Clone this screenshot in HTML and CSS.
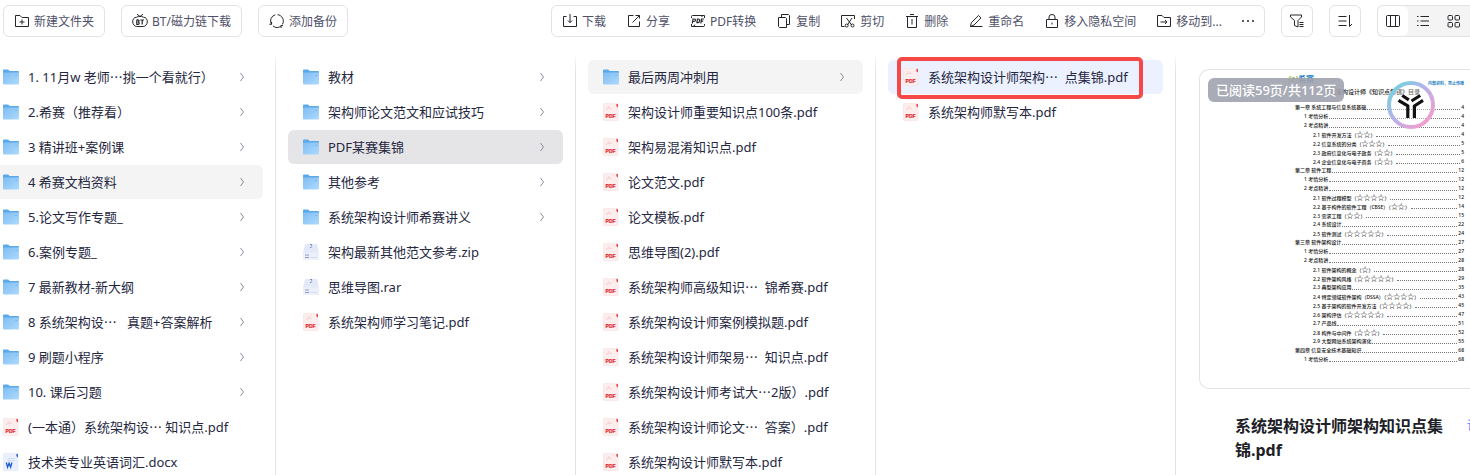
FILE: index.html
```
<!DOCTYPE html>
<html lang="zh-CN">
<head>
    <meta charset="UTF-8">
    <meta name="viewport" content="width=device-width, initial-scale=1.0">
    <title>我的文件</title>
    <link rel="stylesheet" href="styles.css">
</head>
<body>
    <svg class="sprite" aria-hidden="true">
        <defs>
            <linearGradient id="folder-fill" x1="0" y1="0" x2="1" y2="1">
                <stop offset="0" stop-color="#7fbdf3"/>
                <stop offset="1" stop-color="#addafd"/>
            </linearGradient>
            <linearGradient id="ring-fill" x1="0" y1="0" x2="1" y2="1">
                <stop offset="0.15" stop-color="#7fcbe2"/>
                <stop offset="0.5" stop-color="#bcb0ea"/>
                <stop offset="0.85" stop-color="#ee9fd0"/>
            </linearGradient>
        </defs>
        <symbol id="folder" viewBox="0 0 16 16">
            <path d="M0 1.5Q0 .5 1 .5H5.2L6.6 2H15Q16 2 16 3V8H0Z" fill="#5ba9e8"/>
            <path d="M0 4.6Q0 3.6 1 3.6H16V14.5Q16 15.5 15 15.5H1Q0 15.5 0 14.5Z" fill="url(#folder-fill)"/>
            <path d="M12.5 6.5H14" stroke="#6bb1ec"/>
        </symbol>
        <symbol id="pdf" viewBox="0 0 16 18">
            <path d="M.5 1.5Q.5 .5 1.5 .5H12L15 3.5V16.5Q15 17.5 14 17.5H1.5Q.5 17.5 .5 16.5Z" fill="#fdeeee" stroke="#f9dfdf" stroke-width=".6"/>
            <path d="M13.4 .8H14.2Q15 .8 15 1.8V4.4L13.4 3.2Z" fill="#e0454b"/>
            <path d="M3 6.5C4.5 6 5.8 4.2 5.5 3.2C5.1 2.5 5 4.6 8.5 5.4C6.5 5.2 4.5 5.8 3 6.5" fill="none" stroke="#f6c6c7" stroke-width=".6"/>
            <text x="2.6" y="15" font-size="5" font-weight="700" fill="#e5252c" stroke="#e5252c" stroke-width=".2">PDF</text>
        </symbol>
        <symbol id="doc" viewBox="0 0 16 18">
            <path d="M.5 1.5Q.5 .5 1.5 .5H12L15 3.5V16.5Q15 17.5 14 17.5H1.5Q.5 17.5 .5 16.5Z" fill="#eaf1fd" stroke="#dce7fa" stroke-width=".6"/>
            <path d="M13.4 .8H14.2Q15 .8 15 1.8V4.4L13.4 3.2Z" fill="#2c62cc"/>
            <path d="M4.5 5.5H12M4.5 7.5H12" stroke="#ccdcf7"/>
            <path d="M3.3 9.5L4.6 14.2L6.1 10.2L7.6 14.2L8.9 9.5" fill="none" stroke="#1d5bd0" stroke-width="1.3"/>
        </symbol>
        <symbol id="zip" viewBox="0 0 16 18">
            <path d="M2 1H14L16 10V16Q16 17 15 17H1Q0 17 0 16V10Z" fill="#e3e9f8"/>
            <path d="M0 9.5H16V16Q16 17 15 17H1Q0 17 0 16Z" fill="#edf0fb"/>
            <path d="M7 1.5H9M8 3H9.2M7 4.5H8.4" stroke="#7d8bb5"/>
            <path d="M2 12H6M2 14.5H6" stroke="#8b9cc8" stroke-width="1.2"/>
            <path d="M7.5 14.5H14" stroke="#d2dbf1"/>
        </symbol>
        <symbol id="chevron" viewBox="0 0 6 10">
            <path d="M1.5 1L4.5 5L1.5 9" fill="none" stroke="#8b8d9b"/>
        </symbol>
    </svg>

    <header class="toolbar">
        <button class="tool boxed">
            <svg class="icon" viewBox="0 0 16 16"><path d="M1.5 2.5H6L8 4.5H14.5V13.5H1.5ZM8 6.5V11.5M5.5 9H10.5"/></svg>新建文件夹
        </button>
        <button class="tool boxed">
            <svg class="icon" viewBox="0 0 16 16"><path d="M4.6 4.2C6.5 3.2 9.5 3.2 11.4 4.2C14 4.2 15.5 6.5 15.3 9C15 11.5 13.5 13.5 11.2 13.5H4.8C2.5 13.5 1 11.5.7 9C.5 6.5 2 4.2 4.6 4.2M5 1.2L8 3.5L11 1.2"/><path class="bold" d="M4.8 6.7V11.3H6.2Q7.4 11.2 7.2 10Q7.1 9 5.8 9Q7 8.9 7 7.9Q7 6.8 6 6.8H4.8M8.3 7H12M10.2 7V11.6"/></svg>BT/磁力链下载
        </button>
        <button class="tool boxed">
            <svg class="icon" viewBox="0 0 16 16"><path d="M6.3 1.8A6.4 6.4 0 0 0 2.4 11.2M4 13A6.4 6.4 0 0 0 12.2 12.8M13.4 11.4A6.4 6.4 0 0 0 8.6 1.7M2.6 8.7V11.3H.4M12 15V12.6H14"/></svg>添加备份
        </button>

        <div class="actions">
            <button class="tool"><svg class="icon" viewBox="0 0 16 16"><path d="M4.5 3.5H1.5V13.5H14.5V3.5H11.5M8 1V9.5M6 7.5L8 9.7L10 7.5"/></svg>下载</button>
            <button class="tool"><svg class="icon" viewBox="0 0 16 16"><path d="M7.5 2.5H2.5V13.5H13.5V8.5M6.5 9.5L13.5 2.5M9.5 2.5H13.5V5.5"/></svg>分享</button>
            <button class="tool"><svg class="icon" viewBox="0 0 16 16"><path d="M1.5 5V3.5Q1.5 2.5 2.5 2.5H14.5V5M14.5 11V12.5Q14.5 13.5 13.5 13.5H1.5V11M3 13.5L5.2 11.8M13 2.5L11.5 4"/><path class="bold" d="M2.3 10.5L3 6H4.5Q5.8 6.2 5.4 7.5Q5 8.6 2.8 8.5M6.8 10L7.5 6H8.5Q10 6.5 9.6 8.2Q9.2 10 6.8 10M10.8 10.5L11.5 6H14M11.2 8.2H13.2"/></svg>PDF转换</button>
            <button class="tool"><svg class="icon" viewBox="0 0 16 16"><path d="M2.5 4.5H9.5L10.5 5.5V14.5H3.5L2.5 13.5ZM5.5 4.5V1.5H12.5L13.5 2.5V11.5H10.5"/></svg>复制</button>
            <button class="tool"><svg class="icon" viewBox="0 0 16 16"><path d="M4.5 13.5H1.5V2.5H14.5V6M6.5 5L11.6 12M12 5L7.4 12"/><circle cx="6.7" cy="12.5" r="1.5"/><circle cx="12.5" cy="12.5" r="1.5"/></svg>剪切</button>
            <button class="tool"><svg class="icon" viewBox="0 0 16 16"><path d="M2 3.5H14M6 1.5H10M3.5 3.5V14.5H12.5V3.5M8 6V11.5"/></svg>删除</button>
            <button class="tool"><svg class="icon" viewBox="0 0 16 16"><path d="M2.5 13.5L3.3 9.7L10.6 2.5L13 4.9L6 12ZM2 13.5H14.5"/></svg>重命名</button>
            <button class="tool"><svg class="icon" viewBox="0 0 16 16"><path d="M2.5 6.5H13.5V14.5H2.5ZM5 6.5V4Q5 1.5 8 1.5Q11 1.5 11 4V6.5M8 9.5V11.5"/></svg>移入隐私空间</button>
            <button class="tool"><svg class="icon" viewBox="0 0 16 16"><path d="M1.5 2.5H6L8 4.5H14.5V13.5H1.5ZM4.5 9H11M9 7L11 9L9 11"/></svg>移动到...</button>
            <button class="tool" aria-label="更多"><svg class="more" viewBox="0 0 12 16"><circle cx="1" cy="8" r="1"/><circle cx="6" cy="8" r="1"/><circle cx="11" cy="8" r="1"/></svg></button>
        </div>

        <button class="tool square" aria-label="筛选">
            <svg class="icon" viewBox="0 0 16 16"><path d="M1.5 2H12.5V4L9 7.5V14L5.5 12.5V7.5L1.5 4ZM10.5 9.5H14.5M10.5 11.5H14.5M10.5 13.5H14.5"/></svg>
        </button>
        <button class="tool square" aria-label="排序">
            <svg class="icon" viewBox="0 0 16 16"><path d="M1.5 3.5H9.5M1.5 8H9.5M1.5 12.5H9.5M12.5 2V13.5L15 11"/></svg>
        </button>
        <div class="views">
            <button class="view active" aria-label="分栏视图"><svg class="icon" viewBox="0 0 16 16"><rect x="1.5" y="2.5" width="13" height="11" rx="1"/><path d="M5.5 2.5V13.5M10.5 2.5V13.5"/></svg></button>
            <button class="view" aria-label="列表视图"><svg class="icon" viewBox="0 0 16 16"><path d="M2 3.5H3.5M5.5 3.5H14M2 8H3.5M5.5 8H14M2 12.5H3.5M5.5 12.5H14"/></svg></button>
            <button class="view" aria-label="网格视图"><svg class="icon" viewBox="0 0 16 16"><rect x="2" y="2.5" width="4.5" height="4.5" rx="1"/><rect x="9" y="2.5" width="4.5" height="4.5" rx="1"/><rect x="2" y="9.5" width="4.5" height="4.5" rx="1"/><rect x="9" y="9.5" width="4.5" height="4.5" rx="1"/></svg></button>
        </div>
    </header>

    <main class="browser">
        <nav class="column first" id="col1"></nav>
        <nav class="column" id="col2"></nav>
        <nav class="column" id="col3"></nav>
        <nav class="column" id="col4"></nav>

        <section class="preview">
            <div class="page">
                <div class="page-head">
                    <span class="brand"><i>(e)</i>希赛</span>
                    <span class="notice">内部资料，禁止传播</span>
                </div>
                <p class="page-title">系统架构设计师《知识点集锦》目录</p>
                <div id="toc"></div>
                <span class="progress">已阅读59页/共112页</span>
                <svg class="watermark" viewBox="0 0 48 48">
                    <circle cx="24" cy="24" r="22" fill="#ffffff" fill-opacity=".35" stroke="url(#ring-fill)" stroke-width="4"/>
                    <path d="M11.5 19.3L20.8 25V37M36 19.3L27.4 25V37M15.2 14.5L21.8 18.8M33.2 14.5L24.5 20" fill="none" stroke="#111" stroke-width="3.2"/>
                </svg>
            </div>
            <div class="info">
                <h2>系统架构设计师架构知识点集锦.pdf</h2>
                <a href="#">详情</a>
            </div>
        </section>
    </main>

    <script>
        // [icon, name, row state]
        const columns = {
            col1: [
                ['folder', '1. 11月w 老师…挑一个看就行）'],
                ['folder', '2.希赛（推荐看）'],
                ['folder', '3 精讲班+案例课'],
                ['folder', '4 希赛文档资料', 'open'],
                ['folder', '5.论文写作专题_'],
                ['folder', '6.案例专题_'],
                ['folder', '7 最新教材-新大纲'],
                ['folder', '8 系统架构设…   真题+答案解析'],
                ['folder', '9 刷题小程序'],
                ['folder', '10. 课后习题'],
                ['pdf', '(一本通）系统架构设… 知识点.pdf'],
                ['doc', '技术类专业英语词汇.docx']
            ],
            col2: [
                ['folder', '教材'],
                ['folder', '架构师论文范文和应试技巧'],
                ['folder', 'PDF某赛集锦', 'current'],
                ['folder', '其他参考'],
                ['folder', '系统架构设计师希赛讲义'],
                ['zip', '架构最新其他范文参考.zip'],
                ['zip', '思维导图.rar'],
                ['pdf', '系统架构师学习笔记.pdf']
            ],
            col3: [
                ['folder', '最后两周冲刺用', 'open'],
                ['pdf', '架构设计师重要知识点100条.pdf'],
                ['pdf', '架构易混淆知识点.pdf'],
                ['pdf', '论文范文.pdf'],
                ['pdf', '论文模板.pdf'],
                ['pdf', '思维导图(2).pdf'],
                ['pdf', '系统架构师高级知识…  锦希赛.pdf'],
                ['pdf', '系统架构设计师案例模拟题.pdf'],
                ['pdf', '系统架构设计师架易…  知识点.pdf'],
                ['pdf', '系统架构设计师考试大…2版）.pdf'],
                ['pdf', '系统架构设计师论文…  答案）.pdf'],
                ['pdf', '系统架构设计师默写本.pdf']
            ],
            col4: [
                ['pdf', '系统架构设计师架构…  点集锦.pdf', 'selected'],
                ['pdf', '系统架构师默写本.pdf']
            ]
        };

        for (const id in columns) {
            document.getElementById(id).innerHTML = columns[id].map(([icon, name, state]) => `
                <a href="#" class="row ${state || ''}">
                    <svg class="file-icon"><use href="#${icon}"/></svg>
                    <span class="name">${name.replace('…', '<span class="dots">…</span>')}</span>
                    ${icon === 'folder' ? '<svg class="chevron"><use href="#chevron"/></svg>' : ''}
                </a>`).join('');
        }

        // [level, title, page]
        const toc = [
            [0, '第一章 系统工程与信息系统基础', 4],
            [1, '1 考情分析', 4],
            [1, '2 考点精讲', 4],
            [2, '2.1 软件开发方法（☆☆）', 4],
            [2, '2.2 信息系统的分类（☆☆☆）', 5],
            [2, '2.3 政府信息化与电子政务（☆☆）', 5],
            [2, '2.4 企业信息化与电子商务（☆☆）', 6],
            [0, '第二章 软件工程', 12],
            [1, '1 考情分析', 12],
            [1, '2 考点精讲', 12],
            [2, '2.1 软件过程模型（☆☆☆☆）', 12],
            [2, '2.2 基于构件的软件工程（CBSE）（☆☆）', 14],
            [2, '2.3 需求工程（☆☆）', 15],
            [2, '2.4 系统设计', 22],
            [2, '2.5 软件测试（☆☆☆☆☆）', 24],
            [0, '第三章 软件架构设计', 27],
            [1, '1 考情分析', 27],
            [1, '2 考点精讲', 28],
            [2, '2.1 软件架构的概念（☆）', 28],
            [2, '2.2 软件架构风格（☆☆☆☆☆）', 29],
            [2, '2.3 典型架构应用', 35],
            [2, '2.4 特定领域软件架构（DSSA）（☆☆☆☆）', 43],
            [2, '2.5 基于架构的软件开发方法（☆☆☆☆）', 45],
            [2, '2.6 架构评估（☆☆☆☆☆）', 47],
            [2, '2.7 产品线', 51],
            [2, '2.8 构件与中间件（☆☆☆）', 52],
            [2, '2.9 大型网站系统架构演化', 55],
            [0, '第四章 信息安全技术基础知识', 68],
            [1, '1 考情分析', 68]
        ];

        document.getElementById('toc').innerHTML = toc.map(([level, title, page]) => `
            <div class="toc-row level-${level}">
                <span>${title.replace(/☆+/, '<span class="stars">$&</span>')}</span><i class="leader"></i><span>${page}</span>
            </div>`).join('');
    </script>
</body>
</html>
```
FILE: styles.css
```
* {
    margin: 0;
    padding: 0;
    box-sizing: border-box;
}

body {
    display: flex;
    flex-direction: column;
    height: 100vh;
    overflow: hidden;
    background-color: white;
    color: #25273f;
    font-family: "Noto Sans", "Noto Sans CJK SC", sans-serif;
    font-size: 13px;
}

button {
    border: none;
    background: none;
    font-family: inherit;
    cursor: pointer;
}

a {
    color: inherit;
    text-decoration: none;
}

.sprite {
    position: absolute;
    width: 0;
    height: 0;
}

.sprite text {
    font-family: "Liberation Sans", sans-serif;
}

/* toolbar */
.toolbar {
    display: flex;
    gap: 16px;
    padding: 5px 0 0 3px;
}

.tool {
    display: flex;
    align-items: center;
    gap: 4px;
    padding: 0 10px;
    color: #4f5069;
    font-size: 12px;
    white-space: nowrap;
}

.icon {
    flex: none;
    width: 16px;
    height: 16px;
    fill: none;
    stroke: #25262b;
}

.icon .bold {
    stroke-width: 1.2;
}

.more {
    width: 12px;
    height: 16px;
    fill: #25262b;
}

.boxed,
.square,
.actions,
.views {
    height: 32px;
    border: 1px solid #e3e3e6;
    border-radius: 6px;
}

.actions {
    display: flex;
    margin-left: auto;
}

.square {
    width: 32px;
    padding: 0;
    justify-content: center;
}

.views {
    display: flex;
    border-right: none;
    border-radius: 6px 0 0 6px;
    background-color: #f4f4f5;
    overflow: hidden;
}

.view {
    display: flex;
    align-items: center;
    justify-content: center;
    width: 30px;
}

.view.active {
    border-radius: 6px;
    background-color: white;
}

.view:last-child {
    width: 32px;
}

/* file columns */
.browser {
    display: flex;
    flex: 1;
    min-height: 0;
    padding-top: 16px;
}

.column {
    flex: none;
    width: 300px;
    padding: 7px 12px 0;
    border-right: 1px solid;
    border-image: linear-gradient(transparent, #e3e3e6 20px) 1;
    overflow: hidden;
}

.column.first {
    width: 276px;
    padding-left: 0;
}

.row {
    position: relative;
    display: flex;
    align-items: center;
    height: 34px;
    margin-bottom: 1px;
    padding: 0 18px 1px 15px;
    border-radius: 6px;
}

.first .row {
    padding-left: 3px;
    border-radius: 0 6px 6px 0;
}

.row:hover,
.row.open {
    background-color: #f4f4f5;
}

.row.current {
    background-color: #e5e5e8;
}

.row.selected {
    background-color: #ebf1ff;
}

/* red frame round the chosen file */
.row.selected::after {
    content: "";
    position: absolute;
    top: -3px;
    left: 9px;
    right: 20px;
    bottom: -5px;
    border: 4px solid #f74848;
    border-radius: 5px;
}

.file-icon {
    flex: none;
    width: 16px;
    height: 18px;
    margin-right: 9px;
}

.name {
    flex: 1;
    white-space: pre;
}

.dots {
    font-family: "Noto Sans CJK SC", sans-serif;
}

.chevron {
    width: 6px;
    height: 10px;
}

/* preview */
.preview {
    flex: 1;
    min-width: 0;
    padding: 16px 0 0 23px;
    overflow: hidden;
}

.page {
    position: relative;
    height: 320px;
    padding: 4px 6px 0 88px;
    border: 1px solid #e3e3e6;
    border-right: none;
    border-radius: 10px 0 0 10px;
    color: #111;
    font-size: 5px;
    font-weight: 500;
    overflow: hidden;
}

.page-head {
    display: flex;
    justify-content: space-between;
    height: 14px;
    color: #1c7fc4;
}

.brand {
    font-size: 8px;
    line-height: 10px;
    font-weight: bold;
}

.brand i {
    color: #8dbb3c;
}

.notice {
    font-size: 4px;
    font-weight: bold;
    line-height: 20px;
}

.page-title {
    height: 15px;
    padding-left: 36px;
    font-size: 6px;
    line-height: 9px;
}

.toc-row {
    display: flex;
    align-items: center;
    gap: 1px;
    height: 9px;
    padding-left: 7px;
    line-height: 9px;
    white-space: nowrap;
}

.level-1 {
    padding-left: 16px;
}

.level-2 {
    padding-left: 25px;
}

.stars {
    font-family: "Noto Sans CJK SC", sans-serif;
    font-size: 7px;
}

.leader {
    flex: 1;
    height: 4px;
    border-bottom: 1px dotted #777;
}

.progress {
    position: absolute;
    top: 8px;
    left: 8px;
    padding: 0 8px;
    border-radius: 6px;
    background-color: rgba(160, 162, 174, 0.9);
    color: white;
    font-size: 13px;
    font-weight: 500;
    line-height: 24px;
}

.watermark {
    position: absolute;
    top: 11px;
    right: 35px;
    width: 48px;
    height: 48px;
}

.info {
    display: flex;
    gap: 24px;
    padding: 25px 0 0 36px;
}

.info h2 {
    flex: none;
    width: 208px;
    color: #202127;
    font-size: 16px;
    line-height: 24px;
}

.info a {
    flex: none;
    color: #3c6fff;
    font-size: 12px;
    line-height: 24px;
}
```
